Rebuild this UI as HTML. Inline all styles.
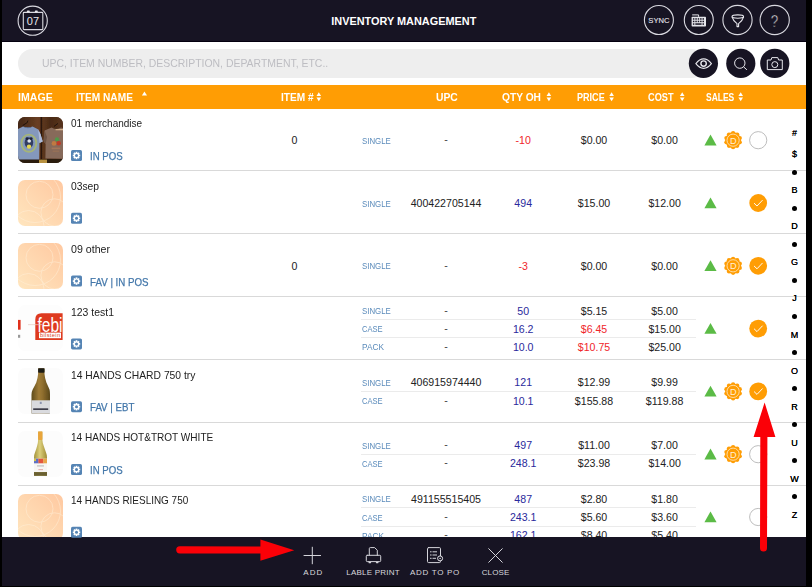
<!DOCTYPE html>
<html lang="en">
<head>
<meta charset="utf-8">
<title>Inventory Management</title>
<style>
*{box-sizing:border-box;margin:0;padding:0}
html,body{width:812px;height:587px;overflow:hidden;background:#000}
body{font-family:"Liberation Sans",sans-serif;position:relative;color:#222}
#app{position:absolute;left:0;top:0;width:806px;height:586px;background:#fff;overflow:hidden}
#lb{position:absolute;left:0;top:0;width:2px;height:587px;background:#000;z-index:9}
#hdr{position:absolute;left:0;top:0;width:806px;height:42px;background:#171423;border-bottom:1px solid #04000f}
#title{position:absolute;left:0;width:807.6px;top:15px;text-align:center;color:#fff;font-weight:bold;font-size:10.9px;line-height:13px}
#search{position:absolute;left:18px;top:49px;width:688px;height:29px;border-radius:15px;background:#eeeeee}
#search span{position:absolute;left:23.5px;top:8px;font-size:11.5px;line-height:13px;color:#bdbdc2;white-space:nowrap;transform-origin:0 50%;transform:scaleX(0.908)}
#thead{position:absolute;left:0;top:85px;width:806px;height:24px;background:#ff9d04;color:#fff;font-weight:bold;font-size:11px;line-height:25px}
#thead span{position:absolute;top:0;white-space:nowrap;transform-origin:0 50%}
.sep{position:absolute;left:18px;width:788px;height:1px;background:#d9d9d9}
.sub{position:absolute;left:361px;width:335px;height:1px;background:#ebebeb}
.t{position:absolute;white-space:nowrap;font-size:10.6px;line-height:12px;color:#222;transform-origin:0 50%}
.c{transform:translateX(-50%);transform-origin:50% 50%}
.num{}
.dash{color:#444}
.tag{color:#4377aa;-webkit-text-stroke:.25px #4377aa}
.unit{color:#5b8bbb;font-size:8.7px}
.blue{color:#2a2a9c}
.red{color:#f0262b}
.thumb{position:absolute;left:18px;width:45px;height:46px;border-radius:7px;overflow:hidden}
.thumb svg{display:block}
.idx{position:absolute;left:784.4px;width:20px;text-align:center;font-size:9px;font-weight:normal;line-height:10px;color:#000;text-shadow:0 0 .4px #000}
.dot{position:absolute;left:791.9px;width:5px;height:5px;border-radius:50%;background:#000}
#ftr{position:absolute;left:0;top:537px;width:806px;height:49px;background:#171423}
.lb{position:absolute;top:568px;color:#d8d8de;font-size:8px;line-height:10px;white-space:nowrap;transform:translateX(-50%)}
#ov{position:absolute;left:0;top:0;width:812px;height:587px;z-index:5;pointer-events:none}
</style>
</head>
<body>
<div id="app">
<div id="hdr"><div id="title">INVENTORY MANAGEMENT</div></div>
<div id="search"><span>UPC, ITEM NUMBER, DESCRIPTION, DEPARTMENT, ETC..</span></div>
<div id="thead"><span style="left:17.8px;transform:scaleX(0.962)">IMAGE</span><span style="left:76.0px;transform:scaleX(0.922)">ITEM NAME</span><span style="left:281.4px;transform:scaleX(0.920)">ITEM #</span><span style="left:435.9px;transform:scaleX(0.938)">UPC</span><span style="left:502.2px;transform:scaleX(0.929)">QTY OH</span><span style="left:576.7px;transform:scaleX(0.824)">PRICE</span><span style="left:648.0px;transform:scaleX(0.834)">COST</span><span style="left:705.7px;transform:scaleX(0.771)">SALES</span></div>
<div class="thumb" style="top:117px"><svg width="45" height="46" viewBox="0 0 45 46"><defs><filter id="bl" x="-10%" y="-10%" width="120%" height="120%"><feGaussianBlur stdDeviation=".7"/></filter><linearGradient id="bg1" x1="0" y1="0" x2="1" y2="0"><stop offset="0" stop-color="#3f2414"/><stop offset=".45" stop-color="#6a3f22"/><stop offset=".7" stop-color="#4a2a16"/><stop offset="1" stop-color="#5a351d"/></linearGradient></defs><rect width="45" height="46" fill="#3a2012"/><g filter="url(#bl)"><rect x="-2" y="-2" width="49" height="50" fill="url(#bg1)"/><rect x="22.6" y="-2" width="1.6" height="50" fill="#2c170b"/><rect x="-2" y="42" width="49" height="6" fill="#2a1a10"/><rect x="21" y="42.6" width="8" height="5" fill="#b8913f"/><path d="M-1 12.4 L5 9.6 Q9.5 12.6 14.6 9.4 L20.4 12.4 L22.4 17 L24.6 24.4 L21.4 26 L21.2 42.4 L-1 42.6 Z" fill="#8498bc"/><path d="M20.2 12.6 L22.6 17.2 L24.8 24.4 L21.6 26 Z" fill="#aebbd8"/><path d="M5 9.6 Q9.5 13 14.6 9.4 Q9.6 11 5 9.6 Z" fill="#5f78a4"/><path d="M26.6 13.4 L33.6 10.4 Q38.6 13.4 43 10.6 L46 11.6 L46 41.8 L27.4 41.6 L27.6 27 L25.6 24 Z" fill="#876a5a"/><path d="M27.6 27 L25.6 24 L26.6 13.4 L29 20 Z" fill="#6e5446"/><ellipse cx="10.9" cy="26.2" rx="7.4" ry="8.6" fill="none" stroke="#aab86c" stroke-width="1.9" opacity=".85"/><ellipse cx="10.9" cy="25.6" rx="4.3" ry="5.4" fill="#313c62"/><circle cx="11.2" cy="24" r="1.8" fill="#dfe3ea"/><circle cx="11" cy="29.6" r="2.2" fill="#e6d650"/><circle cx="9" cy="21.6" r="1.4" fill="#1d2238"/><circle cx="13.2" cy="21.6" r="1.4" fill="#1d2238"/><circle cx="39" cy="22.4" r="2.1" fill="#4f9a48"/><circle cx="40.6" cy="26.2" r="2.3" fill="#c03a28"/><circle cx="36" cy="26.4" r="2.4" fill="#c07a42"/><rect x="33.6" y="30.6" width="8.6" height="1.6" fill="#a5775a"/><rect x="34.6" y="33.6" width="6.6" height="1.2" fill="#9a7058"/><path d="M37.6 12.8 L45.6 12.6" stroke="#dcb994" stroke-width="1.1" fill="none"/><path d="M4.6 8.6 L9.4 5.4 L9.8 3.6 M36 9.4 L40 6.4" stroke="#1a0e06" stroke-width=".9" fill="none"/></g></svg></div>
<div class="t " style="left:70.9px;top:117.3px;transform:scaleX(0.944)">01 merchandise</div>
<div class="t tag" style="left:90.4px;top:150.0px;transform:scaleX(0.910)">IN POS</div>
<div class="t c " style="left:294.5px;top:134.3px">0</div>
<div class="t unit" style="left:361.8px;top:134.7px;transform:scaleX(0.904)">SINGLE</div>
<div class="t c num dash" style="left:446px;top:133.3px">-</div>
<div class="t c num red" style="left:523.2px;top:134.3px">-10</div>
<div class="t c num " style="left:594px;top:134.3px">$0.00</div>
<div class="t c num" style="left:664.6px;top:134.3px">$0.00</div>
<div class="sep" style="top:170px"></div>
<div class="thumb" style="top:180px"><svg width="45" height="46" viewBox="0 0 45 46"><defs><linearGradient id="pg" x1="1" y1="0" x2="0" y2="1"><stop offset="0" stop-color="#ffc8a0"/><stop offset="1" stop-color="#ffe6bf"/></linearGradient></defs><rect width="46" height="46" fill="url(#pg)"/><g fill="none" stroke="#fff1dc" stroke-width=".8" opacity=".6"><circle cx="21.5" cy="14.8" r="13.5"/><circle cx="17" cy="17" r="25.5"/><circle cx="36.5" cy="32.4" r="13.6"/><circle cx="10.5" cy="46" r="15.5"/></g></svg></div>
<div class="t " style="left:70.9px;top:180.1px;transform:scaleX(0.973)">03sep</div>
<div class="t unit" style="left:361.8px;top:197.5px;transform:scaleX(0.904)">SINGLE</div>
<div class="t c num" style="left:446px;top:197.1px">400422705144</div>
<div class="t c num blue" style="left:523.2px;top:197.1px">494</div>
<div class="t c num " style="left:594px;top:197.1px">$15.00</div>
<div class="t c num" style="left:664.6px;top:197.1px">$12.00</div>
<div class="sep" style="top:233px"></div>
<div class="thumb" style="top:243px"><svg width="45" height="46" viewBox="0 0 45 46"><defs><linearGradient id="pg" x1="1" y1="0" x2="0" y2="1"><stop offset="0" stop-color="#ffc8a0"/><stop offset="1" stop-color="#ffe6bf"/></linearGradient></defs><rect width="46" height="46" fill="url(#pg)"/><g fill="none" stroke="#fff1dc" stroke-width=".8" opacity=".6"><circle cx="21.5" cy="14.8" r="13.5"/><circle cx="17" cy="17" r="25.5"/><circle cx="36.5" cy="32.4" r="13.6"/><circle cx="10.5" cy="46" r="15.5"/></g></svg></div>
<div class="t " style="left:70.9px;top:242.9px;transform:scaleX(1.003)">09 other</div>
<div class="t tag" style="left:90.4px;top:275.6px;transform:scaleX(0.919)">FAV | IN POS</div>
<div class="t c " style="left:294.5px;top:259.9px">0</div>
<div class="t unit" style="left:361.8px;top:260.3px;transform:scaleX(0.904)">SINGLE</div>
<div class="t c num dash" style="left:446px;top:258.9px">-</div>
<div class="t c num red" style="left:523.2px;top:259.9px">-3</div>
<div class="t c num " style="left:594px;top:259.9px">$0.00</div>
<div class="t c num" style="left:664.6px;top:259.9px">$0.00</div>
<div class="sep" style="top:296px"></div>
<div class="thumb" style="top:305px"><svg width="45" height="46" viewBox="0 0 45 46"><rect width="45" height="46" fill="#fdfdfd"/><g transform="translate(0 2.4)"><rect x="0" y="12.5" width="2.6" height="9.8" fill="#e0301c"/><rect x="0" y="27.4" width="2.2" height="3" fill="#999"/><path d="M17.3 32.5 V12 Q17.3 5.8 23.5 5.8 H44.6 V32.5 Z" fill="#de3a1f"/><rect x="21" y="25.2" width="22" height="5.6" fill="#fff"/><text x="32" y="30" font-family="Liberation Sans,sans-serif" font-size="5.6" fill="#d4452e" text-anchor="middle" textLength="20">bilstein</text><text x="32" y="24.3" font-family="Liberation Sans,sans-serif" font-size="20.5" fill="#fff" text-anchor="middle" textLength="25" lengthAdjust="spacingAndGlyphs">febi</text><rect x="10" y="17" width="14" height=".7" fill="#e8c8c0"/></g></svg></div>
<div class="t " style="left:70.9px;top:305.7px;transform:scaleX(0.986)">123 test1</div>
<div class="t unit" style="left:361.8px;top:304.9px;transform:scaleX(0.904)">SINGLE</div>
<div class="t c num dash" style="left:446px;top:303.5px">-</div>
<div class="t c num blue" style="left:523.2px;top:304.5px">50</div>
<div class="t c num " style="left:594px;top:304.5px">$5.15</div>
<div class="t c num" style="left:664.6px;top:304.5px">$5.00</div>
<div class="sub" style="top:319px"></div>
<div class="t unit" style="left:361.8px;top:323.1px;transform:scaleX(0.874)">CASE</div>
<div class="t c num dash" style="left:446px;top:321.7px">-</div>
<div class="t c num blue" style="left:523.2px;top:322.7px">16.2</div>
<div class="t c num red" style="left:594px;top:322.7px">$6.45</div>
<div class="t c num" style="left:664.6px;top:322.7px">$15.00</div>
<div class="sub" style="top:337px"></div>
<div class="t unit" style="left:361.8px;top:341.3px;transform:scaleX(0.952)">PACK</div>
<div class="t c num dash" style="left:446px;top:339.9px">-</div>
<div class="t c num blue" style="left:523.2px;top:340.9px">10.0</div>
<div class="t c num red" style="left:594px;top:340.9px">$10.75</div>
<div class="t c num" style="left:664.6px;top:340.9px">$25.00</div>
<div class="sep" style="top:359px"></div>
<div class="thumb" style="top:368px"><svg width="45" height="46" viewBox="0 0 45 46"><rect width="45" height="46" fill="#fcfcfc"/><defs><linearGradient id="b1" x1="0" y1="0" x2="1" y2="0"><stop offset="0" stop-color="#5e4c1c"/><stop offset=".4" stop-color="#a07c36"/><stop offset=".6" stop-color="#8f6e2e"/><stop offset="1" stop-color="#5a471a"/></linearGradient><filter id="bb" x="-10%" y="-10%" width="120%" height="120%"><feGaussianBlur stdDeviation=".45"/></filter></defs><g filter="url(#bb)"><path d="M20.1 .3 H26.5 V6 Q26.8 10 28.4 14.4 Q30.5 19 31.6 21.8 Q32 24 32 26.4 V45 Q32 45.7 31.2 45.7 H14.3 Q13.5 45.7 13.5 45 V26.4 Q13.5 24 14.6 21.8 Q16.5 18 18.3 14.4 Q19.8 10 20.1 6 Z" fill="url(#b1)"/><rect x="20.1" y=".2" width="6.4" height="4.5" rx=".8" fill="#1f1e19"/><rect x="13.5" y="32.3" width="18.5" height="13.4" fill="#d9dade"/><rect x="15.2" y="40.3" width="15" height="1.7" fill="#3e3e4a"/><rect x="21.8" y="33.8" width="1.9" height="2.2" fill="#8d96b0"/></g></svg></div>
<div class="t " style="left:70.9px;top:368.5px;transform:scaleX(0.974)">14 HANDS CHARD 750 try</div>
<div class="t tag" style="left:90.4px;top:401.2px;transform:scaleX(0.914)">FAV | EBT</div>
<div class="t unit" style="left:361.8px;top:376.8px;transform:scaleX(0.904)">SINGLE</div>
<div class="t c num" style="left:446px;top:376.4px">406915974440</div>
<div class="t c num blue" style="left:523.2px;top:376.4px">121</div>
<div class="t c num " style="left:594px;top:376.4px">$12.99</div>
<div class="t c num" style="left:664.6px;top:376.4px">$9.99</div>
<div class="sub" style="top:391px"></div>
<div class="t unit" style="left:361.8px;top:395.0px;transform:scaleX(0.874)">CASE</div>
<div class="t c num dash" style="left:446px;top:393.6px">-</div>
<div class="t c num blue" style="left:523.2px;top:394.6px">10.1</div>
<div class="t c num " style="left:594px;top:394.6px">$155.88</div>
<div class="t c num" style="left:664.6px;top:394.6px">$119.88</div>
<div class="sep" style="top:422px"></div>
<div class="thumb" style="top:431px"><svg width="45" height="46" viewBox="0 0 45 46"><rect width="45" height="46" fill="#fcfcfc"/><defs><linearGradient id="b2" x1="0" y1="0" x2="1" y2="0"><stop offset="0" stop-color="#a3933a"/><stop offset=".45" stop-color="#dccf7c"/><stop offset="1" stop-color="#a08c34"/></linearGradient></defs><g filter="url(#bb)"><path d="M20.1 .5 H24.4 V9 Q24.6 12 25.6 14.4 Q27 18.5 28.1 21.8 Q29 24 29 26.4 V44 Q29 44.8 28.2 44.8 H16.8 Q16 44.8 16 44 V26.4 Q16 24 16.9 21.8 Q18.2 18.5 19.2 14.4 Q20 12 20.1 9 Z" fill="url(#b2)"/><rect x="20.1" y=".4" width="4.3" height="8.6" rx=".7" fill="#e9a53a"/><rect x="16" y="27.7" width="13" height="13.4" fill="#f7f5f3"/><rect x="16" y="27.7" width="4.6" height="4.6" fill="#5d6fc4"/><rect x="20.4" y="27.7" width="5" height="4.6" fill="#e4543c"/><rect x="25.2" y="27.7" width="3.8" height="4.6" fill="#e9a54a"/><rect x="16" y="27.7" width="2" height="2.4" fill="#d8c24a"/><rect x="19" y="34.6" width="7" height=".7" fill="#9a9a9a"/><rect x="20.4" y="38.4" width="4.6" height=".7" fill="#dc8a86"/><rect x="16" y="41.1" width="13" height="3.7" fill="#6a6030"/></g></svg></div>
<div class="t " style="left:70.9px;top:431.3px;transform:scaleX(0.949)">14 HANDS HOT&amp;TROT WHITE</div>
<div class="t tag" style="left:90.4px;top:464.0px;transform:scaleX(0.910)">IN POS</div>
<div class="t unit" style="left:361.8px;top:439.6px;transform:scaleX(0.904)">SINGLE</div>
<div class="t c num dash" style="left:446px;top:438.2px">-</div>
<div class="t c num blue" style="left:523.2px;top:439.2px">497</div>
<div class="t c num " style="left:594px;top:439.2px">$11.00</div>
<div class="t c num" style="left:664.6px;top:439.2px">$7.00</div>
<div class="sub" style="top:454px"></div>
<div class="t unit" style="left:361.8px;top:457.8px;transform:scaleX(0.874)">CASE</div>
<div class="t c num dash" style="left:446px;top:456.4px">-</div>
<div class="t c num blue" style="left:523.2px;top:457.4px">248.1</div>
<div class="t c num " style="left:594px;top:457.4px">$23.98</div>
<div class="t c num" style="left:664.6px;top:457.4px">$14.00</div>
<div class="sep" style="top:485px"></div>
<div class="thumb" style="top:494px"><svg width="45" height="46" viewBox="0 0 45 46"><defs><linearGradient id="pg" x1="1" y1="0" x2="0" y2="1"><stop offset="0" stop-color="#ffc8a0"/><stop offset="1" stop-color="#ffe6bf"/></linearGradient></defs><rect width="46" height="46" fill="url(#pg)"/><g fill="none" stroke="#fff1dc" stroke-width=".8" opacity=".6"><circle cx="21.5" cy="14.8" r="13.5"/><circle cx="17" cy="17" r="25.5"/><circle cx="36.5" cy="32.4" r="13.6"/><circle cx="10.5" cy="46" r="15.5"/></g></svg></div>
<div class="t " style="left:70.9px;top:494.1px;transform:scaleX(0.939)">14 HANDS RIESLING 750</div>
<div class="t unit" style="left:361.8px;top:493.3px;transform:scaleX(0.904)">SINGLE</div>
<div class="t c num" style="left:446px;top:492.9px">491155515405</div>
<div class="t c num blue" style="left:523.2px;top:492.9px">487</div>
<div class="t c num " style="left:594px;top:492.9px">$2.80</div>
<div class="t c num" style="left:664.6px;top:492.9px">$1.80</div>
<div class="sub" style="top:507px"></div>
<div class="t unit" style="left:361.8px;top:511.5px;transform:scaleX(0.874)">CASE</div>
<div class="t c num dash" style="left:446px;top:510.1px">-</div>
<div class="t c num blue" style="left:523.2px;top:511.1px">243.1</div>
<div class="t c num " style="left:594px;top:511.1px">$5.60</div>
<div class="t c num" style="left:664.6px;top:511.1px">$3.60</div>
<div class="sub" style="top:526px"></div>
<div class="t unit" style="left:361.8px;top:529.7px;transform:scaleX(0.952)">PACK</div>
<div class="t c num dash" style="left:446px;top:528.3px">-</div>
<div class="t c num blue" style="left:523.2px;top:529.3px">162.1</div>
<div class="t c num " style="left:594px;top:529.3px">$8.40</div>
<div class="t c num" style="left:664.6px;top:529.3px">$5.40</div>
<div class="idx" style="top:128.0px">#</div>
<div class="idx" style="top:149.0px">$</div>
<div class="dot" style="top:169.6px"></div>
<div class="idx" style="top:185.1px">B</div>
<div class="dot" style="top:205.7px"></div>
<div class="idx" style="top:221.2px">D</div>
<div class="dot" style="top:241.8px"></div>
<div class="idx" style="top:257.3px">G</div>
<div class="dot" style="top:277.9px"></div>
<div class="idx" style="top:293.4px">J</div>
<div class="dot" style="top:314.0px"></div>
<div class="idx" style="top:329.5px">M</div>
<div class="dot" style="top:350.1px"></div>
<div class="idx" style="top:365.6px">O</div>
<div class="dot" style="top:386.1px"></div>
<div class="idx" style="top:401.7px">R</div>
<div class="dot" style="top:422.2px"></div>
<div class="idx" style="top:437.8px">U</div>
<div class="dot" style="top:458.4px"></div>
<div class="idx" style="top:473.9px">W</div>
<div class="dot" style="top:494.4px"></div>
<div class="idx" style="top:510.0px">Z</div>
<div id="ftr"></div>
<div class="lb" style="left:313.3px;letter-spacing:1.10px">ADD</div>
<div class="lb" style="left:373.0px;letter-spacing:0.22px">LABLE PRINT</div>
<div class="lb" style="left:435.0px;letter-spacing:0.69px">ADD TO PO</div>
<div class="lb" style="left:495.6px;letter-spacing:0.14px">CLOSE</div>
</div>
<div id="lb"></div>
<svg id="ov" width="812" height="587" viewBox="0 0 812 587"><rect x="71" y="150.0" width="11" height="11" rx="1.6" fill="#5584b4"/><g fill="#fff"><rect x="75.65" y="151.80" width="1.7" height="7.4" transform="rotate(0 76.50 155.50)"/><rect x="75.65" y="151.80" width="1.7" height="7.4" transform="rotate(45 76.50 155.50)"/><rect x="75.65" y="151.80" width="1.7" height="7.4" transform="rotate(90 76.50 155.50)"/><rect x="75.65" y="151.80" width="1.7" height="7.4" transform="rotate(135 76.50 155.50)"/><circle cx="76.5" cy="155.5" r="2.7"/></g><circle cx="76.5" cy="155.5" r="1.5" fill="#5584b4"/><polygon points="704.4,145.4 716.6,145.4 710.5,134.6" fill="#5bbb46"/><g fill="#ff9d04"><circle cx="733.1" cy="140.2" r="7.9"/><circle cx="739.76" cy="142.36" r="2.15"/><circle cx="737.21" cy="145.86" r="2.15"/><circle cx="733.10" cy="147.20" r="2.15"/><circle cx="728.99" cy="145.86" r="2.15"/><circle cx="726.44" cy="142.36" r="2.15"/><circle cx="726.44" cy="138.04" r="2.15"/><circle cx="728.99" cy="134.54" r="2.15"/><circle cx="733.10" cy="133.20" r="2.15"/><circle cx="737.21" cy="134.54" r="2.15"/><circle cx="739.76" cy="138.04" r="2.15"/></g><circle cx="733.1" cy="140.2" r="6.1" fill="none" stroke="#ffe3b5" stroke-width=".9"/><text x="733.2" y="143.5" font-family="Liberation Sans,sans-serif" font-size="9.2" fill="#fff1d8" text-anchor="middle">D</text><circle cx="758.2" cy="140.2" r="8.6" fill="#fff" stroke="#b5b5b5" stroke-width=".9"/><rect x="71" y="212.8" width="11" height="11" rx="1.6" fill="#5584b4"/><g fill="#fff"><rect x="75.65" y="214.60" width="1.7" height="7.4" transform="rotate(0 76.50 218.30)"/><rect x="75.65" y="214.60" width="1.7" height="7.4" transform="rotate(45 76.50 218.30)"/><rect x="75.65" y="214.60" width="1.7" height="7.4" transform="rotate(90 76.50 218.30)"/><rect x="75.65" y="214.60" width="1.7" height="7.4" transform="rotate(135 76.50 218.30)"/><circle cx="76.5" cy="218.3" r="2.7"/></g><circle cx="76.5" cy="218.3" r="1.5" fill="#5584b4"/><polygon points="704.4,208.2 716.6,208.2 710.5,197.4" fill="#5bbb46"/><circle cx="758.2" cy="203.0" r="8.9" fill="#ff9d04"/><path d="M754.3 203.4 L757 206.0 L762.3 200.4" fill="none" stroke="#fff" stroke-width=".95" stroke-linecap="round" stroke-linejoin="round"/><rect x="71" y="275.6" width="11" height="11" rx="1.6" fill="#5584b4"/><g fill="#fff"><rect x="75.65" y="277.40" width="1.7" height="7.4" transform="rotate(0 76.50 281.10)"/><rect x="75.65" y="277.40" width="1.7" height="7.4" transform="rotate(45 76.50 281.10)"/><rect x="75.65" y="277.40" width="1.7" height="7.4" transform="rotate(90 76.50 281.10)"/><rect x="75.65" y="277.40" width="1.7" height="7.4" transform="rotate(135 76.50 281.10)"/><circle cx="76.5" cy="281.1" r="2.7"/></g><circle cx="76.5" cy="281.1" r="1.5" fill="#5584b4"/><polygon points="704.4,271.0 716.6,271.0 710.5,260.2" fill="#5bbb46"/><g fill="#ff9d04"><circle cx="733.1" cy="265.8" r="7.9"/><circle cx="739.76" cy="267.96" r="2.15"/><circle cx="737.21" cy="271.46" r="2.15"/><circle cx="733.10" cy="272.80" r="2.15"/><circle cx="728.99" cy="271.46" r="2.15"/><circle cx="726.44" cy="267.96" r="2.15"/><circle cx="726.44" cy="263.64" r="2.15"/><circle cx="728.99" cy="260.14" r="2.15"/><circle cx="733.10" cy="258.80" r="2.15"/><circle cx="737.21" cy="260.14" r="2.15"/><circle cx="739.76" cy="263.64" r="2.15"/></g><circle cx="733.1" cy="265.8" r="6.1" fill="none" stroke="#ffe3b5" stroke-width=".9"/><text x="733.2" y="269.1" font-family="Liberation Sans,sans-serif" font-size="9.2" fill="#fff1d8" text-anchor="middle">D</text><circle cx="758.2" cy="265.8" r="8.9" fill="#ff9d04"/><path d="M754.3 266.2 L757 268.8 L762.3 263.2" fill="none" stroke="#fff" stroke-width=".95" stroke-linecap="round" stroke-linejoin="round"/><rect x="71" y="338.4" width="11" height="11" rx="1.6" fill="#5584b4"/><g fill="#fff"><rect x="75.65" y="340.20" width="1.7" height="7.4" transform="rotate(0 76.50 343.90)"/><rect x="75.65" y="340.20" width="1.7" height="7.4" transform="rotate(45 76.50 343.90)"/><rect x="75.65" y="340.20" width="1.7" height="7.4" transform="rotate(90 76.50 343.90)"/><rect x="75.65" y="340.20" width="1.7" height="7.4" transform="rotate(135 76.50 343.90)"/><circle cx="76.5" cy="343.9" r="2.7"/></g><circle cx="76.5" cy="343.9" r="1.5" fill="#5584b4"/><polygon points="704.4,333.8 716.6,333.8 710.5,323.0" fill="#5bbb46"/><circle cx="758.2" cy="328.6" r="8.9" fill="#ff9d04"/><path d="M754.3 329.0 L757 331.6 L762.3 326.0" fill="none" stroke="#fff" stroke-width=".95" stroke-linecap="round" stroke-linejoin="round"/><rect x="71" y="401.2" width="11" height="11" rx="1.6" fill="#5584b4"/><g fill="#fff"><rect x="75.65" y="403.00" width="1.7" height="7.4" transform="rotate(0 76.50 406.70)"/><rect x="75.65" y="403.00" width="1.7" height="7.4" transform="rotate(45 76.50 406.70)"/><rect x="75.65" y="403.00" width="1.7" height="7.4" transform="rotate(90 76.50 406.70)"/><rect x="75.65" y="403.00" width="1.7" height="7.4" transform="rotate(135 76.50 406.70)"/><circle cx="76.5" cy="406.7" r="2.7"/></g><circle cx="76.5" cy="406.7" r="1.5" fill="#5584b4"/><polygon points="704.4,396.6 716.6,396.6 710.5,385.8" fill="#5bbb46"/><g fill="#ff9d04"><circle cx="733.1" cy="391.4" r="7.9"/><circle cx="739.76" cy="393.56" r="2.15"/><circle cx="737.21" cy="397.06" r="2.15"/><circle cx="733.10" cy="398.40" r="2.15"/><circle cx="728.99" cy="397.06" r="2.15"/><circle cx="726.44" cy="393.56" r="2.15"/><circle cx="726.44" cy="389.24" r="2.15"/><circle cx="728.99" cy="385.74" r="2.15"/><circle cx="733.10" cy="384.40" r="2.15"/><circle cx="737.21" cy="385.74" r="2.15"/><circle cx="739.76" cy="389.24" r="2.15"/></g><circle cx="733.1" cy="391.4" r="6.1" fill="none" stroke="#ffe3b5" stroke-width=".9"/><text x="733.2" y="394.7" font-family="Liberation Sans,sans-serif" font-size="9.2" fill="#fff1d8" text-anchor="middle">D</text><circle cx="758.2" cy="391.4" r="8.9" fill="#ff9d04"/><path d="M754.3 391.8 L757 394.4 L762.3 388.8" fill="none" stroke="#fff" stroke-width=".95" stroke-linecap="round" stroke-linejoin="round"/><rect x="71" y="464.0" width="11" height="11" rx="1.6" fill="#5584b4"/><g fill="#fff"><rect x="75.65" y="465.80" width="1.7" height="7.4" transform="rotate(0 76.50 469.50)"/><rect x="75.65" y="465.80" width="1.7" height="7.4" transform="rotate(45 76.50 469.50)"/><rect x="75.65" y="465.80" width="1.7" height="7.4" transform="rotate(90 76.50 469.50)"/><rect x="75.65" y="465.80" width="1.7" height="7.4" transform="rotate(135 76.50 469.50)"/><circle cx="76.5" cy="469.5" r="2.7"/></g><circle cx="76.5" cy="469.5" r="1.5" fill="#5584b4"/><polygon points="704.4,459.4 716.6,459.4 710.5,448.6" fill="#5bbb46"/><g fill="#ff9d04"><circle cx="733.1" cy="454.2" r="7.9"/><circle cx="739.76" cy="456.36" r="2.15"/><circle cx="737.21" cy="459.86" r="2.15"/><circle cx="733.10" cy="461.20" r="2.15"/><circle cx="728.99" cy="459.86" r="2.15"/><circle cx="726.44" cy="456.36" r="2.15"/><circle cx="726.44" cy="452.04" r="2.15"/><circle cx="728.99" cy="448.54" r="2.15"/><circle cx="733.10" cy="447.20" r="2.15"/><circle cx="737.21" cy="448.54" r="2.15"/><circle cx="739.76" cy="452.04" r="2.15"/></g><circle cx="733.1" cy="454.2" r="6.1" fill="none" stroke="#ffe3b5" stroke-width=".9"/><text x="733.2" y="457.5" font-family="Liberation Sans,sans-serif" font-size="9.2" fill="#fff1d8" text-anchor="middle">D</text><circle cx="758.2" cy="454.2" r="8.6" fill="#fff" stroke="#b5b5b5" stroke-width=".9"/><rect x="71" y="526.8" width="11" height="11" rx="1.6" fill="#5584b4"/><g fill="#fff"><rect x="75.65" y="528.60" width="1.7" height="7.4" transform="rotate(0 76.50 532.30)"/><rect x="75.65" y="528.60" width="1.7" height="7.4" transform="rotate(45 76.50 532.30)"/><rect x="75.65" y="528.60" width="1.7" height="7.4" transform="rotate(90 76.50 532.30)"/><rect x="75.65" y="528.60" width="1.7" height="7.4" transform="rotate(135 76.50 532.30)"/><circle cx="76.5" cy="532.3" r="2.7"/></g><circle cx="76.5" cy="532.3" r="1.5" fill="#5584b4"/><polygon points="704.4,522.2 716.6,522.2 710.5,511.4" fill="#5bbb46"/><circle cx="758.2" cy="517.0" r="8.6" fill="#fff" stroke="#b5b5b5" stroke-width=".9"/>
<g fill="none" stroke="#d9d9e0" stroke-width="1.1">
<circle cx="32.7" cy="20.7" r="14.6"/>
<rect x="23.3" y="12.4" width="19.5" height="17.2" rx=".8"/>
<circle cx="658.9" cy="20" r="14.5"/>
<circle cx="698.8" cy="20" r="14.5"/>
<circle cx="737.5" cy="20" r="14.6"/>
<circle cx="774.7" cy="20" r="14.6"/>
</g>
<rect x="26.8" y="10.6" width="3" height="1.8" rx=".8" fill="#e6e6ec"/><rect x="34.8" y="10.6" width="3" height="1.8" rx=".8" fill="#e6e6ec"/>
<text x="32.9" y="25.4" font-family="Liberation Sans,sans-serif" font-size="11" fill="#e6e6ec" text-anchor="middle">07</text>
<text x="658.9" y="22.7" font-family="Liberation Sans,sans-serif" font-size="7.6" fill="#e6e6ec" stroke="#e6e6ec" stroke-width=".1" text-anchor="middle">SYNC</text>
<g>
<rect x="691.6" y="16.8" width="14.4" height="9.8" rx=".8" fill="#e6e6ec"/>
<path d="M692.2 14.9 H698.6 V16.8" fill="none" stroke="#e6e6ec" stroke-width="1"/>
<g fill="#171423">
<rect x="692.9" y="18.2" width="1.5" height="1.5"/><rect x="692.9" y="20.7" width="1.5" height="1.5"/><rect x="695.3" y="18.2" width="1.5" height="1.5"/><rect x="695.3" y="20.7" width="1.5" height="1.5"/><rect x="697.7" y="18.2" width="1.5" height="1.5"/><rect x="697.7" y="20.7" width="1.5" height="1.5"/><rect x="700.1" y="18.2" width="1.5" height="1.5"/><rect x="700.1" y="20.7" width="1.5" height="1.5"/><rect x="702.5" y="18.2" width="1.5" height="1.5"/><rect x="702.5" y="20.7" width="1.5" height="1.5"/>
<rect x="692.9" y="23.3" width="1.5" height="1.5"/><rect x="695.3" y="23.3" width="6.3" height="1.5"/><rect x="702.5" y="23.3" width="1.5" height="1.5"/>
</g></g>
<g fill="none" stroke="#e6e6ec" stroke-width="1.1" stroke-linejoin="round">
<ellipse cx="737.8" cy="16.6" rx="5.8" ry="1.7"/>
<path d="M732 16.8 Q733 20.5 737 23.6 V26.6 H738.6 V23.6 Q742.6 20.5 743.6 16.8"/>
</g>
<text x="0" y="0" transform="translate(774.5 26.7) scale(.8 1)" font-family="Liberation Sans,sans-serif" font-size="16.8" fill="#e6e6ec" stroke="#171423" stroke-width=".55" text-anchor="middle">?</text>

<circle cx="703.4" cy="63.4" r="14.6" fill="#171423"/>
<circle cx="740.8" cy="63.4" r="14.6" fill="#171423"/>
<circle cx="774.8" cy="63.4" r="14.6" fill="#171423"/>
<g fill="none" stroke="#e6e6ec" stroke-width="1">
<path d="M695.9 63.6 Q699.5 58.9 703.6 58.9 Q707.8 58.9 711.4 63.6 Q707.8 68.3 703.6 68.3 Q699.5 68.3 695.9 63.6 Z" stroke-width="1.15"/>
<circle cx="703.6" cy="63.6" r="2.7" stroke-width="1.4"/>
<circle cx="739.8" cy="63.1" r="5.2"/><path d="M743.5 66.8 L746.9 69.8"/>
<path d="M767.3 60 H771 L771.8 57.6 H777.8 L778.6 60 H782.3 V69.6 H767.3 Z"/>
<circle cx="774.8" cy="64.6" r="3"/>
</g>
<polygon points="141.9,95.4 147,95.4 144.45,91.5" fill="#fff"/><polygon points="316.5,96 321.1,96 318.8,92.2" fill="#fff"/><polygon points="316.5,97.4 321.1,97.4 318.8,101.2" fill="#fff"/><polygon points="546.6,96 551.1999999999999,96 548.9,92.2" fill="#fff"/><polygon points="546.6,97.4 551.1999999999999,97.4 548.9,101.2" fill="#fff"/><polygon points="609.3000000000001,96 613.9,96 611.6,92.2" fill="#fff"/><polygon points="609.3000000000001,97.4 613.9,97.4 611.6,101.2" fill="#fff"/><polygon points="679.9000000000001,96 684.5,96 682.2,92.2" fill="#fff"/><polygon points="679.9000000000001,97.4 684.5,97.4 682.2,101.2" fill="#fff"/><polygon points="738.4000000000001,96 743.0,96 740.7,92.2" fill="#fff"/><polygon points="738.4000000000001,97.4 743.0,97.4 740.7,101.2" fill="#fff"/>
<g fill="none" stroke="#d4d4da" stroke-width="1" stroke-linecap="round" stroke-linejoin="round">
<path d="M304 555.5 H320.6 M312.3 547.2 V563.8"/>
<path d="M369.3 555.3 V548.6 Q369.3 547.6 370.3 547.6 H374.6 L377.3 550.2 V555.3"/>
<rect x="366.3" y="555.3" width="14.4" height="6.3" rx=".9"/>
<path d="M369 562.6 H370.6 M376.4 562.6 H378" stroke-width="1.2"/>
<rect x="427.5" y="547.6" width="13" height="15" rx="1.1"/>
<path d="M430.4 551.8 H431.2 M432.9 551.8 H436.6 M430.4 555 H431.2 M432.9 555 H436.6 M430.4 558.3 H431.2 M432.9 558.3 H435.6"/>
<path d="M488.7 548.7 L502.3 562.3 M502.3 548.7 L488.7 562.3"/>
</g>
<circle cx="440.1" cy="558.4" r="2.5" fill="#171423" stroke="#e6e6ec" stroke-width="1"/>
<circle cx="440.1" cy="558.4" r=".7" fill="#e6e6ec"/>

<g fill="#fb0007" stroke="none">
<path d="M179.8 546.2 L260.4 546.6 L260.4 539.6 L294.2 550.2 L260.4 560.8 L260.4 553.6 L179.8 553.4 A3.6 3.6 0 0 1 179.8 546.2 Z"/>
<path d="M760 548 L760.3 437 L753.6 437 L764.6 402.6 L775.4 437 L767.4 437 L767 548 A3.5 3.5 0 0 1 760 548 Z"/>
</g>
</svg>
</body>
</html>
